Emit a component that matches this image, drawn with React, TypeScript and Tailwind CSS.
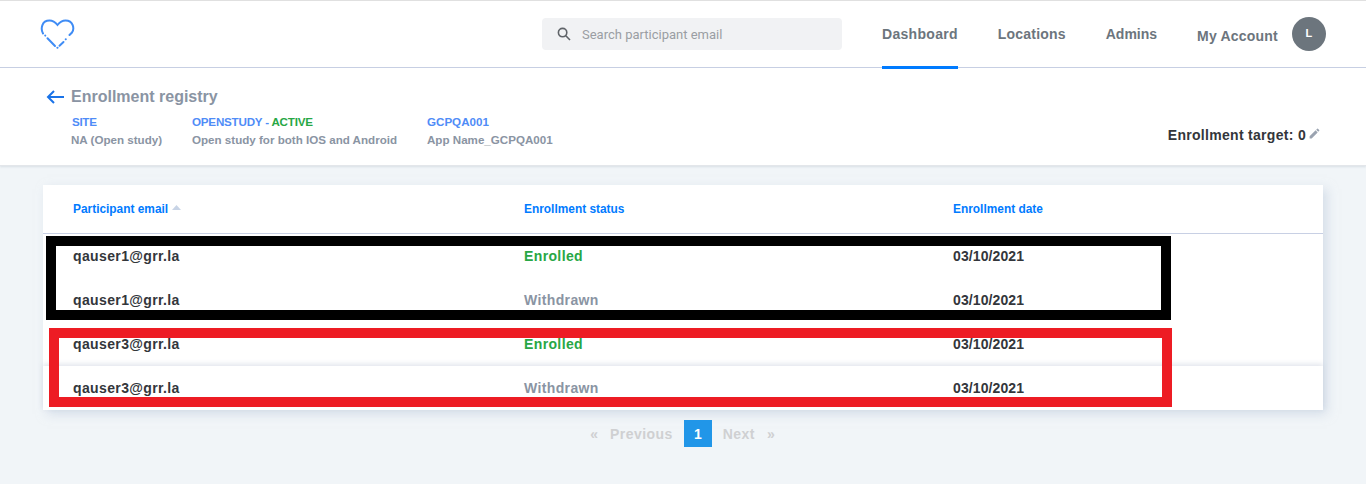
const rows = [
  { email: "qauser1@grr.la", status: "Enrolled", date: "03/10/2021" },
  { email: "qauser1@grr.la", status: "Withdrawn", date: "03/10/2021" },
  { email: "qauser3@grr.la", status: "Enrolled", date: "03/10/2021" },
  { email: "qauser3@grr.la", status: "Withdrawn", date: "03/10/2021" },
];

function Heart() {
  return (
    <svg width="35" height="30" viewBox="0 0 35 30" fill="none" stroke="#3f8cf5" strokeWidth="2" strokeLinecap="round">
      <path d="M3 14.5 C0.5 10 1.5 1.5 9.5 1.5 C13 1.5 15.5 3.5 17.5 6 C19.5 3.5 22 1.5 25.5 1.5 C33.5 1.5 34.5 10 32 13.5 L29.5 16" />
      <path d="M5.2 16.5 L5.3 16.6" />
      <path d="M7.5 19.3 L15 27" />
      <path d="M17.4 28.7 L17.5 28.8" />
      <path d="M19.5 26.7 L23.5 23" />
      <path d="M25.7 20.3 L25.8 20.2" />
    </svg>
  );
}

export default function App() {
  return (
    <div className="relative min-h-[484px] bg-[#f1f5f8] font-['Liberation_Sans',Arial,sans-serif]">
      <header className="flex h-[68px] items-stretch border-t border-b border-t-[#e0e0e0] border-b-[#c8d0e4] bg-white">
        <div className="w-[542px] pl-[40px] pt-[18px]">
          <Heart />
        </div>
        <div className="pt-[17px]">
          <div className="flex h-8 w-[300px] items-center rounded bg-[#f1f2f4] pl-[15px]">
            <svg width="14" height="14" viewBox="0 0 14 14" fill="none" stroke="#5f6368" strokeWidth="1.6">
              <circle cx="5.6" cy="5.6" r="4.2" />
              <path d="M8.8 8.8 L13 13" />
            </svg>
            <span className="ml-[11px] pt-[1px] font-['Roboto',sans-serif] text-[13px] text-[#9a9ea3]">Search participant email</span>
          </div>
        </div>
        <nav className="ml-10 flex text-sm font-bold text-[#6c757d]">
          <div className="-mb-px h-[68px] border-b-[3px] border-[#007bff] pt-[23px] tracking-[0.3px]">Dashboard</div>
          <div className="ml-10 pt-[23px] tracking-[0.2px]">Locations</div>
          <div className="ml-10 pt-[23px]">Admins</div>
        </nav>
        <div className="ml-10 flex items-start pt-[16px] text-sm font-bold tracking-[0.2px] text-[#6c757d]">
          <span className="pt-[9px]">My Account</span>
          <span className="ml-[14px] flex h-[34px] w-[34px] items-center justify-center rounded-full bg-[#6c757d] text-[11px] text-white">L</span>
        </div>
      </header>

      <section className="flex h-[98px] border-b border-[#e3e6ea] bg-white pl-[46px] pr-[45px] shadow-[0_1px_2px_rgba(170,180,195,0.35)]">
        <div className="flex-1 pt-[20px]">
          <div className="flex items-center">
            <svg width="18" height="14" viewBox="0 0 18 14" fill="none" stroke="#1a73e8" strokeWidth="2">
              <path d="M18 7 H2" />
              <path d="M8 1 L2 7 L8 13" />
            </svg>
            <span className="ml-[7px] text-base font-bold leading-[18px] text-[#8a94a3]">Enrollment registry</span>
          </div>
          <div className="mt-[7px] flex pl-[25px] text-[11.6px] font-bold leading-[18px]">
            <div className="w-[121px]">
              <div className="pl-px tracking-[-0.3px] text-[#4f8cf7]">SITE</div>
              <div className="text-[#8a94a3]">NA (Open study)</div>
            </div>
            <div className="w-[235px]">
              <div className="tracking-[-0.2px] text-[#4f8cf7]">OPENSTUDY - <span className="text-[#28a745]">ACTIVE</span></div>
              <div className="text-[#8a94a3]">Open study for both IOS and Android</div>
            </div>
            <div>
              <div className="text-[#4f8cf7]">GCPQA001</div>
              <div className="text-[#8a94a3]">App Name_GCPQA001</div>
            </div>
          </div>
        </div>
        <div className="flex items-start pt-[59px] text-sm font-bold leading-4 tracking-[0.3px] text-[#33363b]">
          <span>Enrollment target: 0</span>
          <svg className="ml-[2px]" width="13" height="13" viewBox="0 0 24 24" fill="#9aa3b0">
            <path d="M3 17.25V21h3.75L17.81 9.94l-3.75-3.75L3 17.25zM20.71 7.04a1 1 0 0 0 0-1.41l-2.34-2.34a1 1 0 0 0-1.41 0l-1.83 1.83 3.75 3.75 1.83-1.83z" />
          </svg>
        </div>
      </section>

      <main className="px-[43px] pt-[19px]">
        <div className="bg-white shadow-[4px_4px_10px_rgba(190,202,220,0.55)]">
          <div className="grid h-[49px] grid-cols-[451px_429px_1fr] items-center border-b border-[#c8d0e4] pl-[30px] pt-[2px] text-[11.9px] font-bold text-[#007bff]">
            <div className="flex items-center">
              Participant email
              <svg className="ml-1 mb-1" width="9" height="5" viewBox="0 0 9 5" fill="#c8d4e6"><path d="M0 5 L4.5 0 L9 5 Z" /></svg>
            </div>
            <div>Enrollment status</div>
            <div>Enrollment date</div>
          </div>
          {rows.map((r, i) => (
            <div
              key={i}
              className={`grid h-11 grid-cols-[451px_429px_1fr] items-center pl-[30px] text-sm font-bold tracking-[0.37px] text-[#33363b] ${i === 3 ? "shadow-[0_-2px_5px_rgba(190,198,212,0.45)]" : ""}`}
            >
              <div>{r.email}</div>
              <div className={r.status === "Enrolled" ? "text-[#28a745]" : "text-[#8a94a3]"}>{r.status}</div>
              <div className="tracking-[0.1px]">{r.date}</div>
            </div>
          ))}
        </div>
        <div className="mt-[10px] flex items-center justify-center pr-[1px] text-sm font-bold text-[#cfd0d2]">
          <span className="mr-3">«</span>
          <span className="tracking-[0.45px]">Previous</span>
          <span className="mx-[11px] flex h-[27px] w-7 items-center justify-center bg-[#2196e8] text-white">1</span>
          <span className="tracking-[0.45px]">Next</span>
          <span className="ml-3">»</span>
        </div>
      </main>

      <div className="pointer-events-none absolute left-[46px] top-[236px] h-[84px] w-[1125px] border-[10px] border-black" />
      <div className="pointer-events-none absolute left-[49px] top-[328px] h-[79px] w-[1123px] border-[10px] border-[#ed1c24]" />
    </div>
  );
}
